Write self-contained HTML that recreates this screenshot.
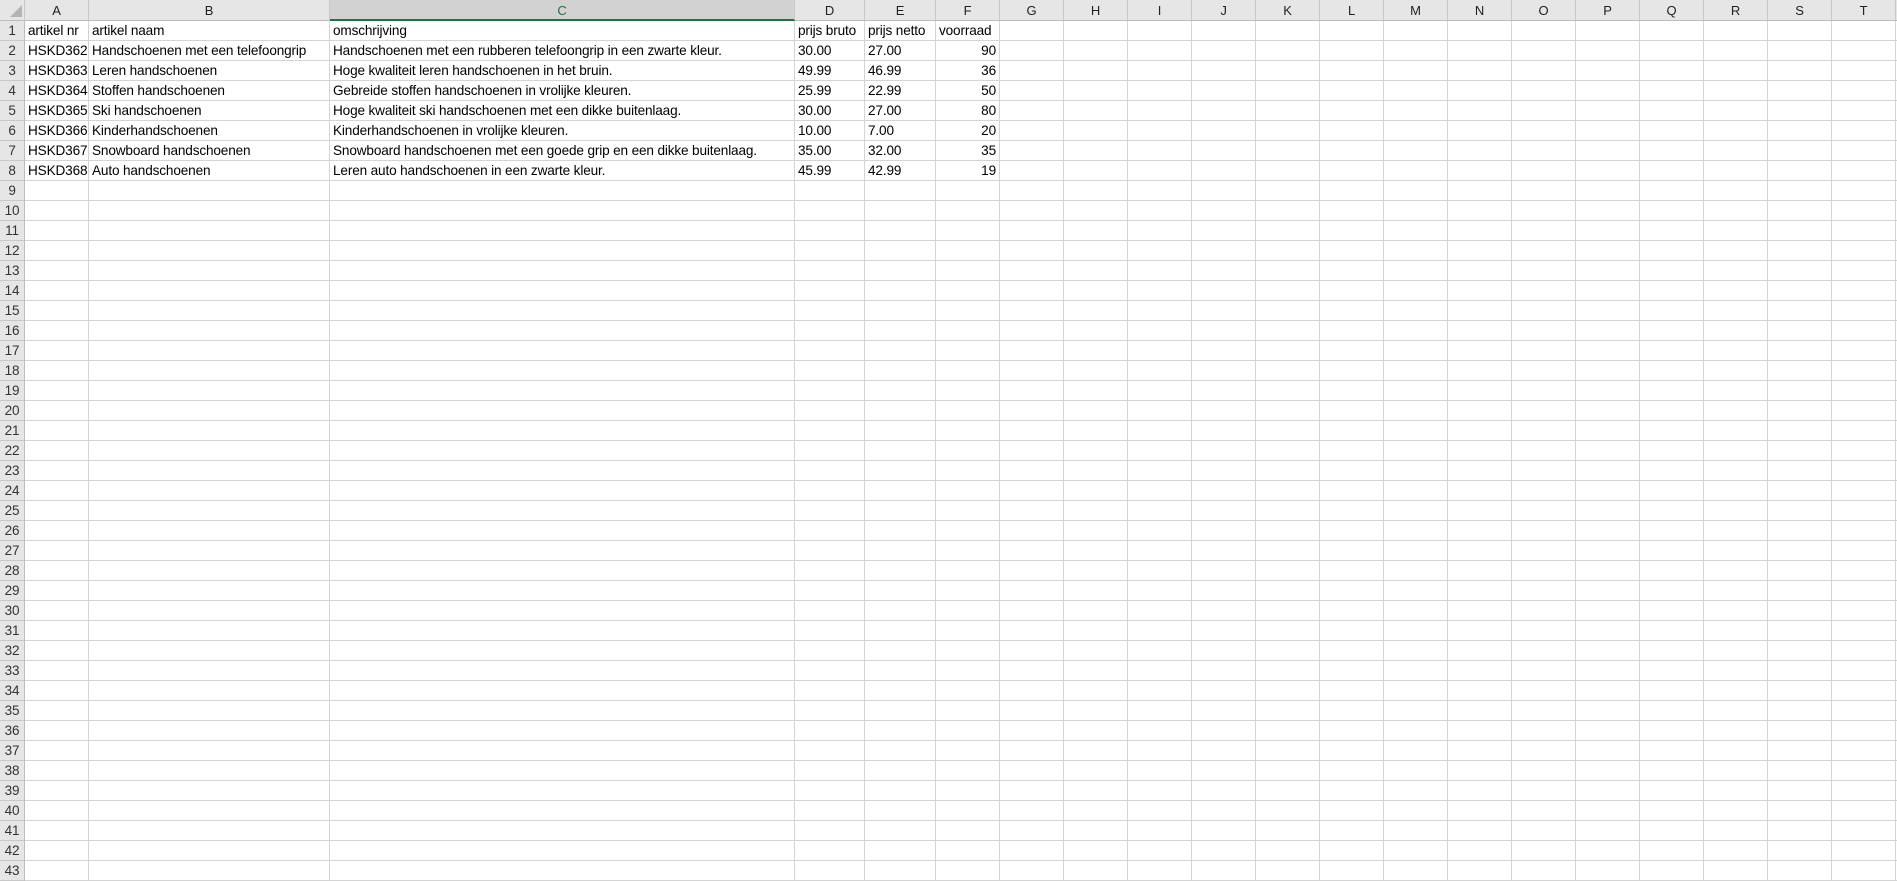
<!DOCTYPE html>
<html><head><meta charset="utf-8"><style>
*{margin:0;padding:0;box-sizing:border-box}
body{width:1897px;height:881px;overflow:hidden;background:#fff;position:relative;font-family:"Liberation Sans",sans-serif;font-size:13.6px;color:#000;letter-spacing:-0.15px}
.hdr{position:absolute;left:0;top:0;width:1897px;height:21px;background:#e6e6e6;border-bottom:1px solid #bdbdbd}
.ch{position:absolute;top:0;height:20px;line-height:21px;text-align:center;color:#222;font-size:13px;border-right:1px solid #c8c8c8}
.rh{position:absolute;left:0;top:21px;width:25px;height:860px;background:#e6e6e6;border-right:1px solid #bdbdbd}
.grid{position:absolute;left:25px;top:21px;width:1872px;height:860px;background:repeating-linear-gradient(to bottom,transparent 0,transparent 19px,#d4d4d4 19px,#d4d4d4 20px)}
.v{position:absolute;top:21px;width:1px;height:860px;background:#d4d4d4}
.rn{position:absolute;left:0;width:24px;height:19px;line-height:20px;text-align:center;color:#333;font-size:13.5px}
.rn::after{content:"";position:absolute;left:0;right:0;bottom:-1px;height:1px;background:#c8c8c8}
.c{position:absolute;height:19px;line-height:20px;white-space:nowrap;padding-left:3px}
.r{text-align:right;padding-right:4px;padding-left:0}
</style></head><body>
<div class="hdr"></div>
<div style="position:absolute;left:0;top:0;width:25px;height:21px;border-right:1px solid #c8c8c8"><svg width="24" height="21" style="position:absolute;left:0;top:0"><polygon points="10,17 22,17 22,5" fill="#b4b4b4"/></svg></div>
<div class="ch" style="left:25px;width:64px">A</div>
<div class="ch" style="left:89px;width:241px">B</div>
<div class="ch" style="left:330px;width:465px;background:#d2d2d2;color:#217346;border-bottom:2px solid #217346;height:21px">C</div>
<div class="ch" style="left:795px;width:70px">D</div>
<div class="ch" style="left:865px;width:71px">E</div>
<div class="ch" style="left:936px;width:64px">F</div>
<div class="ch" style="left:1000px;width:64px">G</div>
<div class="ch" style="left:1064px;width:64px">H</div>
<div class="ch" style="left:1128px;width:64px">I</div>
<div class="ch" style="left:1192px;width:64px">J</div>
<div class="ch" style="left:1256px;width:64px">K</div>
<div class="ch" style="left:1320px;width:64px">L</div>
<div class="ch" style="left:1384px;width:64px">M</div>
<div class="ch" style="left:1448px;width:64px">N</div>
<div class="ch" style="left:1512px;width:64px">O</div>
<div class="ch" style="left:1576px;width:64px">P</div>
<div class="ch" style="left:1640px;width:64px">Q</div>
<div class="ch" style="left:1704px;width:64px">R</div>
<div class="ch" style="left:1768px;width:64px">S</div>
<div class="ch" style="left:1832px;width:64px">T</div>
<div class="grid"></div>
<div class="v" style="left:88px"></div><div class="v" style="left:329px"></div><div class="v" style="left:794px"></div><div class="v" style="left:864px"></div><div class="v" style="left:935px"></div><div class="v" style="left:999px"></div><div class="v" style="left:1063px"></div><div class="v" style="left:1127px"></div><div class="v" style="left:1191px"></div><div class="v" style="left:1255px"></div><div class="v" style="left:1319px"></div><div class="v" style="left:1383px"></div><div class="v" style="left:1447px"></div><div class="v" style="left:1511px"></div><div class="v" style="left:1575px"></div><div class="v" style="left:1639px"></div><div class="v" style="left:1703px"></div><div class="v" style="left:1767px"></div><div class="v" style="left:1831px"></div><div class="v" style="left:1895px"></div>
<div class="rh">
<div class="rn" style="top:0">1</div><div class="rn" style="top:20px">2</div><div class="rn" style="top:40px">3</div><div class="rn" style="top:60px">4</div><div class="rn" style="top:80px">5</div><div class="rn" style="top:100px">6</div><div class="rn" style="top:120px">7</div><div class="rn" style="top:140px">8</div><div class="rn" style="top:160px">9</div><div class="rn" style="top:180px">10</div><div class="rn" style="top:200px">11</div><div class="rn" style="top:220px">12</div><div class="rn" style="top:240px">13</div><div class="rn" style="top:260px">14</div><div class="rn" style="top:280px">15</div><div class="rn" style="top:300px">16</div><div class="rn" style="top:320px">17</div><div class="rn" style="top:340px">18</div><div class="rn" style="top:360px">19</div><div class="rn" style="top:380px">20</div><div class="rn" style="top:400px">21</div><div class="rn" style="top:420px">22</div><div class="rn" style="top:440px">23</div><div class="rn" style="top:460px">24</div><div class="rn" style="top:480px">25</div><div class="rn" style="top:500px">26</div><div class="rn" style="top:520px">27</div><div class="rn" style="top:540px">28</div><div class="rn" style="top:560px">29</div><div class="rn" style="top:580px">30</div><div class="rn" style="top:600px">31</div><div class="rn" style="top:620px">32</div><div class="rn" style="top:640px">33</div><div class="rn" style="top:660px">34</div><div class="rn" style="top:680px">35</div><div class="rn" style="top:700px">36</div><div class="rn" style="top:720px">37</div><div class="rn" style="top:740px">38</div><div class="rn" style="top:760px">39</div><div class="rn" style="top:780px">40</div><div class="rn" style="top:800px">41</div><div class="rn" style="top:820px">42</div><div class="rn" style="top:840px">43</div>
</div>

<div class="c" style="left:25px;top:21px">artikel nr</div><div class="c" style="left:89px;top:21px">artikel naam</div><div class="c" style="left:330px;top:21px">omschrijving</div><div class="c" style="left:795px;top:21px">prijs bruto</div><div class="c" style="left:865px;top:21px">prijs netto</div><div class="c" style="left:936px;top:21px">voorraad</div>

<div class="c" style="left:25px;top:41px">HSKD362</div><div class="c" style="left:89px;top:41px">Handschoenen met een telefoongrip</div><div class="c" style="left:330px;top:41px">Handschoenen met een rubberen telefoongrip in een zwarte kleur.</div><div class="c" style="left:795px;top:41px">30.00</div><div class="c" style="left:865px;top:41px">27.00</div><div class="c r" style="left:936px;top:41px;width:64px">90</div>

<div class="c" style="left:25px;top:61px">HSKD363</div><div class="c" style="left:89px;top:61px">Leren handschoenen</div><div class="c" style="left:330px;top:61px">Hoge kwaliteit leren handschoenen in het bruin.</div><div class="c" style="left:795px;top:61px">49.99</div><div class="c" style="left:865px;top:61px">46.99</div><div class="c r" style="left:936px;top:61px;width:64px">36</div>

<div class="c" style="left:25px;top:81px">HSKD364</div><div class="c" style="left:89px;top:81px">Stoffen handschoenen</div><div class="c" style="left:330px;top:81px">Gebreide stoffen handschoenen in vrolijke kleuren.</div><div class="c" style="left:795px;top:81px">25.99</div><div class="c" style="left:865px;top:81px">22.99</div><div class="c r" style="left:936px;top:81px;width:64px">50</div>

<div class="c" style="left:25px;top:101px">HSKD365</div><div class="c" style="left:89px;top:101px">Ski handschoenen</div><div class="c" style="left:330px;top:101px">Hoge kwaliteit ski handschoenen met een dikke buitenlaag.</div><div class="c" style="left:795px;top:101px">30.00</div><div class="c" style="left:865px;top:101px">27.00</div><div class="c r" style="left:936px;top:101px;width:64px">80</div>

<div class="c" style="left:25px;top:121px">HSKD366</div><div class="c" style="left:89px;top:121px">Kinderhandschoenen</div><div class="c" style="left:330px;top:121px">Kinderhandschoenen in vrolijke kleuren.</div><div class="c" style="left:795px;top:121px">10.00</div><div class="c" style="left:865px;top:121px">7.00</div><div class="c r" style="left:936px;top:121px;width:64px">20</div>

<div class="c" style="left:25px;top:141px">HSKD367</div><div class="c" style="left:89px;top:141px">Snowboard handschoenen</div><div class="c" style="left:330px;top:141px">Snowboard handschoenen met een goede grip en een dikke buitenlaag.</div><div class="c" style="left:795px;top:141px">35.00</div><div class="c" style="left:865px;top:141px">32.00</div><div class="c r" style="left:936px;top:141px;width:64px">35</div>

<div class="c" style="left:25px;top:161px">HSKD368</div><div class="c" style="left:89px;top:161px">Auto handschoenen</div><div class="c" style="left:330px;top:161px">Leren auto handschoenen in een zwarte kleur.</div><div class="c" style="left:795px;top:161px">45.99</div><div class="c" style="left:865px;top:161px">42.99</div><div class="c r" style="left:936px;top:161px;width:64px">19</div>
</body></html>
